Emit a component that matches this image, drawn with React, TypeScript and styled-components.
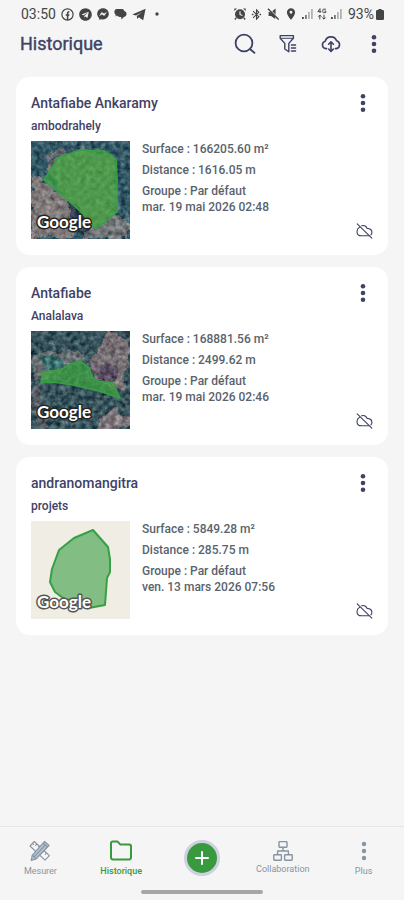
import React from "react";
import styled, { createGlobalStyle, css } from "styled-components";
import { FaTelegram, FaFacebookMessenger } from "react-icons/fa";
import { MdLocationOn, MdBluetoothConnected } from "react-icons/md";

const color = {
  page: "#f5f5f5",
  card: "#ffffff",
  ink: "#3f4265",
  text: "#59636d",
  muted: "#8794a3",
  green: "#38993f",
  status: "#444444",
};

const GlobalStyle = createGlobalStyle`
  * { box-sizing: border-box; }
  body {
    margin: 0;
    background: ${color.page};
    color: ${color.ink};
    font-family: Roboto, "Liberation Sans", sans-serif;
  }
  h1, h2, p, ul { margin: 0; padding: 0; }
  button { font-family: inherit; }
`;

const Page = styled.div`
  min-height: 100vh;
  display: flex;
  flex-direction: column;
`;

const StatusBar = styled.div`
  display: flex;
  justify-content: space-between;
  align-items: center;
  height: 28px;
  padding: 0 20px 0 21px;
  color: ${color.status};
  font-size: 14px;
  svg { display: block; flex: none; }
`;

const StatusGroup = styled.div<{ $gap: number }>`
  display: flex;
  align-items: center;
  gap: ${(p) => p.$gap}px;
`;

const Battery = styled.span`
  display: flex;
  align-items: center;
  gap: 2px;
  margin-left: 2px;
`;

const TopBar = styled.header`
  display: flex;
  align-items: center;
  height: 32px;
  padding: 0 14px 0 20px;
`;

const PageTitle = styled.h1`
  flex: 1;
  font-size: 18px;
  line-height: 24px;
  font-weight: 400;
  -webkit-text-stroke: 0.4px ${color.ink};
`;

const Tools = styled.div`
  display: flex;
  gap: 11px;
`;

const IconButton = styled.button`
  display: flex;
  align-items: center;
  justify-content: center;
  width: 32px;
  height: 32px;
  padding: 0;
  border: 0;
  background: none;
  color: ${color.ink};
  cursor: pointer;
`;

const List = styled.ul`
  flex: 1;
  display: flex;
  flex-direction: column;
  gap: 12px;
  padding: 17px 16px 16px;
  list-style: none;
`;

const Card = styled.li`
  padding: 11px 9px 16px 15px;
  border-radius: 14px;
  background: ${color.card};
`;

const CardHead = styled.div`
  display: flex;
  align-items: center;
  justify-content: space-between;
  height: 30px;
`;

const CardTitle = styled.h2`
  font-size: 14px;
  line-height: 30px;
  font-weight: 500;
`;

const Place = styled.p`
  font-size: 12px;
  line-height: 16px;
  font-weight: 500;
`;

const CardBody = styled.div`
  display: flex;
  gap: 12px;
  margin-top: 7px;
`;

const Thumb = styled.svg`
  display: block;
  flex: none;
  width: 99px;
  height: 98px;
`;

const Facts = styled.div`
  flex: 1;
  font-size: 12px;
  line-height: 16px;
  font-weight: 500;
  color: ${color.text};
`;

const Fact = styled.p<{ $tight?: boolean }>`
  margin-top: ${(p) => (p.$tight ? 0 : 5)}px;
  &:first-child { margin-top: 0; }
`;

const SyncState = styled.div`
  align-self: flex-end;
  padding-right: 6px;
  color: ${color.ink};
  svg { display: block; }
`;

const BottomNav = styled.nav`
  display: grid;
  grid-template-columns: repeat(5, 1fr);
  height: 64px;
  border-top: 1px solid #e6e6e8;
`;

const NavItem = styled.button<{ $active?: boolean; $compact?: boolean }>`
  display: flex;
  flex-direction: column;
  align-items: center;
  gap: ${(p) => (p.$compact ? 0 : 2)}px;
  padding: 13px 0 0;
  border: 0;
  background: none;
  font-size: 9px;
  line-height: 14px;
  color: ${color.muted};
  cursor: pointer;
  svg { display: block; }
  ${(p) =>
    p.$active &&
    css`
      color: ${color.green};
      font-weight: 500;
    `}
`;

const AddCell = styled.div`
  display: flex;
  justify-content: center;
  padding-top: 13px;
`;

const AddButton = styled.button`
  display: flex;
  align-items: center;
  justify-content: center;
  width: 36px;
  height: 36px;
  padding: 0;
  border: 3px solid #cdd0df;
  border-radius: 50%;
  background: ${color.green};
  color: #ffffff;
  cursor: pointer;
`;

const HomeHandle = styled.div`
  width: 30%;
  height: 4px;
  margin: 0 auto 6px;
  border-radius: 2px;
  background: #a5a6a6;
`;

const Dots = ({ height, r }: { height: number; r: number }) => (
  <svg width="6" height={height} viewBox={`0 0 6 ${height}`} fill="currentColor" aria-hidden="true">
    <circle cx="3" cy={r} r={r} />
    <circle cx="3" cy={height / 2} r={r} />
    <circle cx="3" cy={height - r} r={r} />
  </svg>
);

const FacebookRing = () => (
  <svg width="13" height="13" viewBox="0 0 13 13" fill="none" stroke="currentColor">
    <circle cx="6.5" cy="6.5" r="5.6" strokeWidth="1.2" />
    <path d="M6.6 12V5.2Q6.6 3.6 8.4 3.8M4.7 6.9H8.4" strokeWidth="1.5" />
  </svg>
);

const ChatBubbles = () => (
  <svg width="13" height="12" viewBox="0 0 13 12" fill="currentColor">
    <path d="M3 1H8Q10 1 10.3 3Q12.6 3.4 12.6 6Q12.6 8.5 10 8.9L7.3 11.4V9H6Q3.6 9 3 7.6L1.6 8.4V6.6Q.4 6 .4 4Q.4 1 3 1Z" />
  </svg>
);

const PaperPlane = () => (
  <svg width="14" height="13" viewBox="0 0 14 13" fill="currentColor">
    <path d="M.2 6.4 13.6 .8 11.2 12.2 6.8 9.3 5.2 11 4.8 8 10.2 4 4 7.6Z" />
  </svg>
);

const AlarmIcon = () => (
  <svg width="12" height="12" viewBox="0 0 12 12" fill="currentColor">
    <path d="M.3 3V.5H3ZM11.7 3V.5H9Z" />
    <circle cx="6" cy="6.2" r="5" />
    <path d="M2 9.8 1 11.5M10 9.8l1 1.7" stroke="currentColor" strokeWidth="1.5" />
    <path d="M6 3.2V6.4L8.4 7.6" fill="none" stroke="#f5f5f5" strokeWidth="1.1" />
  </svg>
);

const MuteIcon = () => (
  <svg width="13" height="12" viewBox="0 0 13 12" fill="currentColor">
    <path d="M1.6 4H4.2L8.6.6V10.8L4.2 8H1.6Z" />
    <path d="M1 .8 11.4 11.2" stroke="#f5f5f5" strokeWidth="2.6" />
    <path d="M1 .8 11.6 11.4" stroke="currentColor" strokeWidth="1.4" />
    <path d="M2 4.2H4.6L8 8V10.8L4.4 8H2Z" />
  </svg>
);

const SignalIcon = () => (
  <svg width="11" height="12" viewBox="0 0 11 12" fill="#b3b3b3">
    <path d="M0 9H1.8V11H0Z" fill="#444444" />
    <path d="M3 7H4.8V11H3Z" fill="#777777" />
    <path d="M6 4H7.8V11H6ZM9 1H10.8V11H9Z" />
  </svg>
);

const DataIcon = () => (
  <svg width="10" height="12" viewBox="0 0 10 12" fill="none" stroke="currentColor">
    <path d="M3 5V.6L.8 3.6H4.3M9 1.2H6.4Q5.8 1.2 5.8 2V3.8Q5.8 4.6 6.4 4.6H8.8V3H7.4" strokeWidth=".9" />
    <path d="M2.8 11.4V7.2M1.2 8.7 2.8 7 4.4 8.7M7 6.8V11M5.4 9.6 7 11.2 8.6 9.6" strokeWidth="1" />
  </svg>
);

const BatteryIcon = () => (
  <svg width="8" height="11" viewBox="0 0 8 11" fill="currentColor">
    <path d="M2.4 0H5.6V1H6.8Q8 1 8 2.2V9.8Q8 11 6.8 11H1.2Q0 11 0 9.8V2.2Q0 1 1.2 1H2.4Z" />
  </svg>
);

const SearchIcon = () => (
  <svg width="22" height="22" viewBox="0 0 22 22" fill="none" stroke="currentColor" strokeWidth="1.8" strokeLinecap="round">
    <circle cx="10" cy="10" r="8.4" />
    <path d="M16.2 16.2 20.4 19.8" />
  </svg>
);

const FilterIcon = () => (
  <svg width="18" height="20" viewBox="0 0 18 20" fill="none" stroke="currentColor" strokeWidth="1.4" strokeLinecap="round" strokeLinejoin="round">
    <path d="M1.2 1.6H14.4V4.2L9.8 9.4V17.8L5.8 15V9.4L1.2 4.2Z" />
    <path d="M1.5 4.3H14" strokeWidth="1" />
    <path d="M12.4 11H16.6M12.4 14H16.6M12.4 17H16.6" />
  </svg>
);

const CloudSyncIcon = () => (
  <svg width="20" height="18" viewBox="0 0 20 18" fill="none" stroke="currentColor" strokeWidth="1.6" strokeLinecap="round" strokeLinejoin="round">
    <path d="M5.6 13.6H4.6A3.8 3.8 0 0 1 4.2 6.2 6 6 0 0 1 15.6 5.8 4 4 0 0 1 15.2 13.6H14.4" />
    <path d="M10 7.2V16M7.6 9.2 10 6.8 12.4 9.2M7.6 14 10 16.4 12.4 14" />
  </svg>
);

const CloudOffIcon = () => (
  <svg width="17" height="16" viewBox="0 0 17 16" fill="none" stroke="currentColor" strokeWidth="1.1" strokeLinecap="round">
    <path d="M1.2.8 15.8 15.2" />
    <path d="M3.6 4.2A4.8 4.8 0 0 0 1 8.4Q1 12.8 5.6 12.8H12.8" />
    <path d="M5.6 2.8Q9.4 1.6 11.2 5.4 15.8 5.8 15.9 9.2 15.9 10.8 14.9 11.8" />
  </svg>
);

const MeasureIcon = () => (
  <svg width="22" height="22" viewBox="0 0 22 22" fill="none" stroke="currentColor" strokeWidth="1.1" strokeLinejoin="round">
    <path d="M5.3 1.5 20.4 15.6 16 20.2 1 6Z" />
    <path d="M8 4 6.4 5.7M10.2 6 9.2 7.2M3.5 3.4 5 4.8M17.6 13 16 14.6M15.2 10.8 14 12" />
    <path d="M15.6 1.4 20 5.5 7 19 2.2 20.4 3.2 15.3Z" fill="#b9c2cc" />
    <path d="M14 3 18.4 7.2M3.4 15.2 7 18.8M16.2 5.2 5.2 16.8" />
  </svg>
);

const FolderIcon = () => (
  <svg width="22" height="22" viewBox="0 0 22 22" fill="none" stroke="currentColor" strokeWidth="2" strokeLinejoin="round">
    <path d="M1 3.2Q1 1.4 2.8 1.4H7.4L10.2 4.4H19.2Q21 4.4 21 6.2V17.6Q21 19.4 19.2 19.4H2.8Q1 19.4 1 17.6Z" />
  </svg>
);

const TeamIcon = () => (
  <svg width="20" height="22" viewBox="0 0 20 22" fill="none" stroke="currentColor" strokeWidth="1.4" strokeLinejoin="round">
    <rect x="6" y="1.6" width="8" height="5.6" rx=".6" />
    <rect x=".8" y="14.8" width="7.6" height="5.4" rx=".6" />
    <rect x="11.6" y="14.8" width="7.6" height="5.4" rx=".6" />
    <path d="M10 7.2V11M4.6 14.8V11H15.4V14.8" />
  </svg>
);

const PlusIcon = () => (
  <svg width="14" height="14" viewBox="0 0 14 14" fill="none" stroke="currentColor" strokeWidth="2" strokeLinecap="round">
    <path d="M7 1V13M1 7H13" />
  </svg>
);

type Patch = { d: string; fill: string };

type Parcel = {
  id: string;
  title: string;
  place: string;
  surface: string;
  distance: string;
  date: string;
  outline: string;
  base: string;
  patches: Patch[];
  terrain?: number;
};

const parcels: Parcel[] = [
  {
    id: "ankaramy",
    title: "Antafiabe Ankaramy",
    place: "ambodrahely",
    surface: "166205.60 m²",
    distance: "1616.05 m",
    date: "mar. 19 mai 2026 02:48",
    outline: "28,16 50,9 73,10 80,14 85,19 86,36 86,71 65,88 50,71 40,62 13,39",
    base: "#38566a",
    terrain: 4,
    patches: [
      { d: "M0 36 14 38 36 58 46 78 40 98H0Z", fill: "#85787f" },
      { d: "M14 24 34 12 55 8 82 14 86 40 84 75 64 90 38 62Z", fill: "#716f70" },
      { d: "M48 98 60 88 86 72 99 82V98Z", fill: "#77747d" },
      { d: "M36 58 48 66 62 86 54 94 38 74Z", fill: "#343a56" },
      { d: "M14 14 34 6 36 10 18 20Z", fill: "#6c6a73" },
    ],
  },
  {
    id: "analalava",
    title: "Antafiabe",
    place: "Analalava",
    surface: "168881.56 m²",
    distance: "2499.62 m",
    date: "mar. 19 mai 2026 02:46",
    outline: "10,52 12,41 29,39 40,33 49,30 58,37 62,47 67,50 82,52 89,67 68,60 42,54 22,51",
    base: "#3c5160",
    terrain: 9,
    patches: [
      { d: "M76 0 99 6V30L90 60 64 48 60 34Z", fill: "#7c6f7a" },
      { d: "M64 34 86 32 84 52 66 48Z", fill: "#64506a" },
      { d: "M0 30 14 20 52 20 60 36 44 32 28 42 4 50Z", fill: "#6a6c76" },
      { d: "M14 26 30 24 34 34 22 41 14 38Z", fill: "#3f6d72" },
      { d: "M0 58 8 54 12 70 20 98H6Z", fill: "#5f606c" },
      { d: "M68 88 86 78 99 86V98H66Z", fill: "#857681" },
    ],
  },
  {
    id: "andranomangitra",
    title: "andranomangitra",
    place: "projets",
    surface: "5849.28 m²",
    distance: "285.75 m",
    date: "ven. 13 mars 2026 07:56",
    outline: "62,9 77,26 79,38 79,51 76,57 74,84 58,87 32,77 24,71 19,61 21,48 28,29 43,17",
    base: "#efede4",
    patches: [],
  },
];

const ParcelMap = ({ parcel }: { parcel: Parcel }) => (
  <Thumb viewBox="0 0 99 98" preserveAspectRatio="none" role="img" aria-label={`Carte ${parcel.title}`}>
    {parcel.terrain && (
      <filter id={`terrain-${parcel.id}`} x="0" y="0" width="1" height="1" colorInterpolationFilters="sRGB">
        <feTurbulence type="fractalNoise" baseFrequency="0.09" numOctaves="3" seed={parcel.terrain} result="warp" />
        <feDisplacementMap in="SourceGraphic" in2="warp" scale="12" xChannelSelector="R" yChannelSelector="G" result="ground" />
        <feTurbulence type="fractalNoise" baseFrequency="0.2" numOctaves="3" seed={parcel.terrain + 3} />
        <feColorMatrix values="0.9 0.5 0 0 -0.2  0.9 0.5 0.1 0 -0.2  0.8 0.5 0.1 0 -0.2  0 0 0 0 1" result="grain" />
        <feComposite in="ground" in2="grain" operator="arithmetic" k1="0" k2="1" k3="0.5" k4="-0.27" />
      </filter>
    )}
    <g filter={parcel.terrain ? `url(#terrain-${parcel.id})` : undefined}>
      <rect x={parcel.terrain ? -15 : 0} y={parcel.terrain ? -15 : 0} width="130" height="130" fill={parcel.base} />
      {parcel.patches.map((patch) => (
        <path key={patch.d} d={patch.d} fill={patch.fill} />
      ))}
    </g>
    <polygon
      points={parcel.outline}
      fill={parcel.terrain ? "#3fae3e" : "#389d42"}
      fillOpacity={parcel.terrain ? 0.66 : 0.6}
      stroke="#37a047"
      strokeWidth={parcel.terrain ? 1.6 : 2}
      strokeLinejoin="round"
    />
    <text
      x="6"
      y="87"
      fontFamily="Lato, sans-serif"
      fontWeight="700"
      fontSize="17"
      fill="#ffffff"
      stroke={parcel.terrain ? "#242424" : "#555555"}
      strokeWidth="3"
      strokeLinejoin="round"
      paintOrder="stroke"
    >
      Google
    </text>
  </Thumb>
);

const ParcelCard = ({ parcel }: { parcel: Parcel }) => (
  <Card>
    <CardHead>
      <CardTitle>{parcel.title}</CardTitle>
      <IconButton aria-label={`Options ${parcel.title}`}>
        <Dots height={18} r={2.3} />
      </IconButton>
    </CardHead>
    <Place>{parcel.place}</Place>
    <CardBody>
      <ParcelMap parcel={parcel} />
      <Facts>
        <Fact>Surface : {parcel.surface}</Fact>
        <Fact>Distance : {parcel.distance}</Fact>
        <Fact>Groupe : Par défaut</Fact>
        <Fact $tight>{parcel.date}</Fact>
      </Facts>
      <SyncState role="img" aria-label="Non synchronisé">
        <CloudOffIcon />
      </SyncState>
    </CardBody>
  </Card>
);

export default function App() {
  return (
    <Page>
      <GlobalStyle />
      <StatusBar>
        <StatusGroup $gap={5}>
          <span>03:50</span>
          <FacebookRing />
          <FaTelegram size={13} />
          <FaFacebookMessenger size={12} />
          <ChatBubbles />
          <PaperPlane />
          <svg width="12" height="4" viewBox="0 0 12 4" fill="currentColor">
            <circle cx="6" cy="2" r="1.7" />
          </svg>
        </StatusGroup>
        <StatusGroup $gap={4}>
          <AlarmIcon />
          <MdBluetoothConnected size={13} />
          <MuteIcon />
          <MdLocationOn size={14} />
          <SignalIcon />
          <DataIcon />
          <SignalIcon />
          <Battery>
            93%
            <BatteryIcon />
          </Battery>
        </StatusGroup>
      </StatusBar>
      <TopBar>
        <PageTitle>Historique</PageTitle>
        <Tools>
          <IconButton aria-label="Rechercher">
            <SearchIcon />
          </IconButton>
          <IconButton aria-label="Filtrer">
            <FilterIcon />
          </IconButton>
          <IconButton aria-label="Synchroniser">
            <CloudSyncIcon />
          </IconButton>
          <IconButton aria-label="Menu">
            <Dots height={18} r={2.3} />
          </IconButton>
        </Tools>
      </TopBar>
      <List>
        {parcels.map((parcel) => (
          <ParcelCard key={parcel.id} parcel={parcel} />
        ))}
      </List>
      <BottomNav>
        <NavItem>
          <MeasureIcon />
          Mesurer
        </NavItem>
        <NavItem $active aria-current="page">
          <FolderIcon />
          Historique
        </NavItem>
        <AddCell>
          <AddButton aria-label="Ajouter">
            <PlusIcon />
          </AddButton>
        </AddCell>
        <NavItem $compact>
          <TeamIcon />
          Collaboration
        </NavItem>
        <NavItem>
          <svg width="6" height="22" viewBox="0 0 6 22" fill="currentColor" aria-hidden="true">
            <circle cx="3" cy="4" r="2.2" />
            <circle cx="3" cy="11" r="2.2" />
            <circle cx="3" cy="18" r="2.2" />
          </svg>
          Plus
        </NavItem>
      </BottomNav>
      <HomeHandle />
    </Page>
  );
}
